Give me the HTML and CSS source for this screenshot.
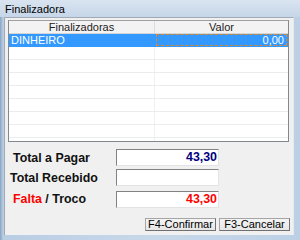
FILE: index.html
```html
<!DOCTYPE html>
<html>
<head>
<meta charset="utf-8">
<link rel="stylesheet" href="styles.css">
</head>
<body>
<div class="window">
  <div class="titlebar"><span class="title">Finalizadora</span></div>
  <div class="frame">
    <div class="client">
      <div class="grid">
        <div class="row head">
          <div class="c1">Finalizadoras</div>
          <div class="c2">Valor</div>
        </div>
        <div class="row sel">
          <div class="c1">DINHEIRO</div>
          <div class="c2"><span class="focus">0,00</span></div>
        </div>
        <div class="row"><div class="c1"></div><div class="c2"></div></div>
        <div class="row"><div class="c1"></div><div class="c2"></div></div>
        <div class="row"><div class="c1"></div><div class="c2"></div></div>
        <div class="row"><div class="c1"></div><div class="c2"></div></div>
        <div class="row"><div class="c1"></div><div class="c2"></div></div>
        <div class="row"><div class="c1"></div><div class="c2"></div></div>
        <div class="row"><div class="c1"></div><div class="c2"></div></div>
        <div class="row last"><div class="c1"></div><div class="c2"></div></div>
      </div>
      <div class="totals">
        <div class="trow">
          <div class="label l1">Total a Pagar</div>
          <div class="box blue">43,30</div>
        </div>
        <div class="trow">
          <div class="label l2">Total Recebido</div>
          <div class="box"></div>
        </div>
        <div class="trow">
          <div class="label l3"><span class="red">Falta</span> / Troco</div>
          <div class="box red">43,30</div>
        </div>
      </div>
      <div class="buttons">
        <div class="btn">F4-Confirmar</div>
        <div class="btn">F3-Cancelar</div>
      </div>
    </div>
  </div>
</div>
</body>
</html>
```
FILE: styles.css
```css
html, body {
  margin: 0;
  padding: 0;
  background: #9fb4cc;
}
.window {
  width: 300px;
  height: 240px;
  display: flex;
  flex-direction: column;
  background: linear-gradient(90deg, #a9bfd8 0%, #c8d7e8 30%, #d4e0ed 60%, #c2d3e6 100%);
  font-family: "Liberation Sans", Arial, sans-serif;
}
.titlebar {
  height: 17px;
  display: flex;
  align-items: center;
  padding-left: 5px;
  background: linear-gradient(180deg, #d9e4f0 0%, #c6d6e8 100%);
}
.title {
  font-family: "Liberation Sans", Arial, sans-serif;
  font-size: 11px;
  color: #000;
  margin-top: 1px;
}
.frame {
  flex: 1;
  padding: 0 6px 5px 4px;
  display: flex;
  background: linear-gradient(90deg, #8aa4c2 0px, #b9cde3 3px, #c7d8ea 50%, #bcd0e5 100%);
}
.client {
  flex: 1;
  background: #f0f0f0;
  border-top: 1px solid #a0aab5;
  border-left: 1px solid #a0aab5;
  border-right: 1px solid #e6e9ee;
  display: flex;
  flex-direction: column;
  padding: 2px 3px 0 3px;
}
.grid {
  background: #fff;
  border: 1px solid #828790;
  border-top-color: #a0a0a0;
  width: 279px;
  height: 120px;
  display: flex;
  flex-direction: column;
  font-size: 11px;
}
.row {
  height: 12px;
  display: flex;
  border-bottom: 1px solid #ececec;
  flex: none;
}
.row.last {
  border-bottom: none;
  flex: 1;
}
.c1 {
  width: 146px;
  border-right: 1px solid #f0f0f0;
  line-height: 12px;
  padding-left: 2px;
  box-sizing: border-box;
}
.c2 {
  flex: 1;
  line-height: 12px;
  text-align: right;
}
.head {
  height: 12px;
  background: #f3f3f3;
  border-bottom: 1px solid #d5d5d5;
  color: #222;
}
.head .c1, .head .c2 {
  text-align: center;
  border-right: 1px solid #dcdcdc;
  padding: 0;
}
.head .c2 { border-right: none; }
.sel {
  background: #3399ff;
  color: #fff;
  border-bottom: 1px solid #3399ff;
}
.sel .c1 { border-right: 1px solid #3399ff; }
.sel .c2 {
  display: flex;
  padding: 0 1px 0 1px;
}
.focus {
  flex: 1;
  height: 10px;
  line-height: 10px;
  border: 1px dashed #e0882a;
  padding-right: 2px;
  text-align: right;
}
.totals {
  display: flex;
  flex-direction: column;
  gap: 3px;
  margin-top: 7px;
}
.trow {
  display: flex;
  align-items: center;
  height: 17px;
}
.label {
  width: 108px;
  font-size: 12.4px;
  font-weight: bold;
  color: #111;
  box-sizing: border-box;
}
.l1 { padding-left: 5px; }
.l2 { padding-left: 2px; }
.l3 { padding-left: 5px; margin-top: 3px; }
.red { color: #ff0000; }
.box {
  width: 103px;
  height: 17px;
  box-sizing: border-box;
  background: #fff;
  border-top: 1px solid #828282;
  border-left: 1px solid #828282;
  border-right: 1px solid #e3e3e3;
  border-bottom: 1px solid #e3e3e3;
  font-size: 12.4px;
  font-weight: bold;
  text-align: right;
  line-height: 15px;
  padding-right: 1px;
}
.box.blue { color: #000080; }
.box.red { color: #ff0000; }
.trow:nth-child(3) .box { margin-top: 3px; }
.buttons {
  display: flex;
  justify-content: flex-end;
  gap: 3px;
  margin-top: 12px;
  padding-right: 0;
}
.btn {
  width: 71px;
  height: 13px;
  box-sizing: border-box;
  border: 1px solid #707070;
  border-top-color: #a5a5a5;
  border-left-color: #a5a5a5;
  background: linear-gradient(180deg, #f4f4f4 0%, #e6e6e6 100%);
  font-size: 11px;
  line-height: 11px;
  text-align: center;
  color: #000;
}
```
